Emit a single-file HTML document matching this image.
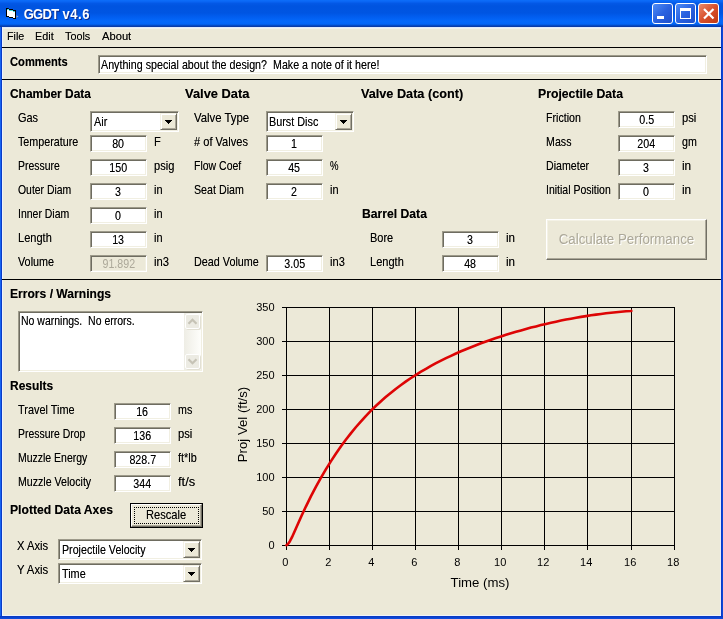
<!DOCTYPE html>
<html><head><meta charset="utf-8"><title>GGDT v4.6</title>
<style>
html,body{margin:0;padding:0}
body{width:723px;height:619px;overflow:hidden;position:relative;background:#ECE9D8;font-family:"Liberation Sans",sans-serif;font-size:11px;color:#000}
.abs{position:absolute}
.t{position:absolute;white-space:pre;font-size:11px;line-height:11px;transform-origin:0 0;display:block;text-shadow:0 0 0 rgba(0,0,0,.5)}
.tb{position:absolute;box-sizing:border-box;background:#fff;border:1px solid;border-color:#9D9A8A #fff #fff #9D9A8A;box-shadow:inset 1px 1px 0 #6E6C60,inset -1px -1px 0 #F1EFE2;text-align:center;overflow:hidden}
.tb.dis{background:#ECE9D8;color:#ACA899}.tb.dis .v{text-shadow:none}
.tb .v{text-shadow:0 0 0 rgba(0,0,0,.5);display:inline-block;font-size:11px;line-height:11px;transform:scale(.97,1.13);transform-origin:50% 0;position:relative;top:1.400px}
.hl{position:absolute;left:2px;width:719px;height:1px;background:#000}
.combo{position:absolute;box-sizing:border-box;height:21px;background:#fff;border:1px solid;border-color:#9D9A8A #fff #fff #9D9A8A;box-shadow:inset 1px 1px 0 #6E6C60,inset -1px -1px 0 #F1EFE2}
.cbtn{position:absolute;right:1px;top:1px;width:17px;height:17px;box-sizing:border-box;background:#ECE9D8;border:1px solid;border-color:#F4F2E6 #716F64 #716F64 #F4F2E6;box-shadow:inset 1px 1px 0 #fff,inset -1px -1px 0 #ACA899}
.cbtn svg{position:absolute;left:4px;top:6px}
.wb{position:absolute;top:3px;width:21px;height:21px;box-sizing:border-box;border:1px solid #fff;border-radius:3px}
#w{position:absolute;left:0;top:0;width:723px;height:619px;will-change:transform}
</style></head><body><div id="w">
<!-- window chrome -->
<div class="abs" style="left:0;top:0;width:723px;height:27px;background:linear-gradient(to bottom,#0D6EFA 0,#0A66F4 1.5px,#0358E6 3.5px,#0054E0 6px,#0055E2 13px,#025EF0 17px,#0468FA 21px,#0366F6 24px,#0250D0 25.3px,#0A3CA8 26px,#0A3CA8 27px)"></div>
<div class="abs" style="left:0;top:27px;width:1px;height:592px;background:#1664F0"></div>
<div class="abs" style="left:1px;top:27px;width:1px;height:592px;background:#0A3CC8"></div>
<div class="abs" style="left:2px;top:27px;width:1px;height:589px;background:#EEF3FC"></div>
<div class="abs" style="left:3px;top:27px;width:717px;height:1px;background:#E2ECFA"></div>
<div class="abs" style="left:3px;top:28px;width:717px;height:1px;background:#F2F2EC"></div>
<div class="abs" style="left:720px;top:27px;width:1px;height:589px;background:#E6EDFA"></div>
<div class="abs" style="left:721px;top:27px;width:1px;height:592px;background:#0A3CC8"></div>
<div class="abs" style="left:722px;top:27px;width:1px;height:592px;background:#0C48D8"></div>
<div class="abs" style="left:2px;top:615px;width:719px;height:1px;background:#EEF3FC"></div>
<div class="abs" style="left:0;top:616px;width:723px;height:3px;background:linear-gradient(to bottom,#0A38C0 0,#0A3CC8 1px,#0C4ADA 2px,#0C4CDC 3px)"></div>
<!-- icon -->
<svg class="abs" style="left:4px;top:6px" width="18" height="16" viewBox="4 6 18 16">
 <path d="M6 8H8.700V9H13V10H16V19H13V18H9V17H6Z" fill="#000"/>
 <path d="M7 9H9V10H13V11H15V18H13V17H9V16H7Z" fill="#fff"/>
 <rect x="7" y="9" width="1.700" height="1" fill="#45D6D6"/><rect x="9" y="10" width="4" height="1" fill="#45D6D6"/><rect x="13" y="11" width="2" height="1" fill="#45D6D6"/>
 <path d="M16.500 15.300l2 1.200-2 1.200z" fill="#A0A4B0"/>
</svg>
<span class="abs" style="left:23.700px;top:7.300px;font:bold 13px/13px 'Liberation Sans',sans-serif;color:#fff;text-shadow:1px 1px 0 #0A2A8C;white-space:pre;transform:scale(1,1.08);transform-origin:0 0"><span style="letter-spacing:-.700px">GGDT</span><span style="letter-spacing:.500px"> v4.6</span></span>
<div class="wb" style="left:652px;background:linear-gradient(135deg,#4E8CF6,#2A62E0 50%,#1E4FCC)"><div class="abs" style="left:4px;top:12px;width:7px;height:3px;background:#fff"></div></div>
<div class="wb" style="left:675px;background:linear-gradient(135deg,#4E8CF6,#2A62E0 50%,#1E4FCC)"><div class="abs" style="left:4px;top:4px;width:9px;height:7px;border:1px solid #fff;border-top-width:3px"></div></div>
<div class="wb" style="left:698px;background:linear-gradient(135deg,#EC8A6C,#D8502C 50%,#C03A14)"><svg class="abs" style="left:0;top:0" width="19" height="19"><path d="M5 5l9.5 9.5M14.500 5l-9.500 9.500" stroke="#fff" stroke-width="2.200" fill="none"/></svg></div>
<!-- separators -->
<div class="hl" style="top:47px"></div><div class="hl" style="top:79px"></div><div class="hl" style="top:279px"></div>
<!-- comment box -->
<div class="tb" style="left:98px;top:55px;width:609px;height:19px"></div>
<!-- combos -->
<div class="combo" style="left:90px;top:111px;width:89px"><div class="cbtn"><svg width="7" height="4" shape-rendering="crispEdges"><path d="M0 0h7v1h-1v1h-1v1h-1v1h-1v-1h-1v-1h-1v-1h-1z" fill="#000"/></svg></div></div>
<div class="combo" style="left:266px;top:111px;width:88px"><div class="cbtn"><svg width="7" height="4" shape-rendering="crispEdges"><path d="M0 0h7v1h-1v1h-1v1h-1v1h-1v-1h-1v-1h-1v-1h-1z" fill="#000"/></svg></div></div>
<div class="combo" style="left:58px;top:539px;width:144px"><div class="cbtn"><svg width="7" height="4" shape-rendering="crispEdges"><path d="M0 0h7v1h-1v1h-1v1h-1v1h-1v-1h-1v-1h-1v-1h-1z" fill="#000"/></svg></div></div>
<div class="combo" style="left:58px;top:563px;width:144px"><div class="cbtn"><svg width="7" height="4" shape-rendering="crispEdges"><path d="M0 0h7v1h-1v1h-1v1h-1v1h-1v-1h-1v-1h-1v-1h-1z" fill="#000"/></svg></div></div>
<!-- calc button (disabled) -->
<div class="abs" style="left:546px;top:219px;width:161px;height:41px;box-sizing:border-box;border:1px solid;border-color:#fff #716F64 #716F64 #fff;box-shadow:inset -1px -1px 0 #ACA899,inset 1px 1px 0 #F4F2E6;text-align:center"><span style="display:inline-block;font-size:13.33px;line-height:14px;margin-top:12.500px;transform:scale(1,1.07);color:#ACA899;text-shadow:1px 1px 0 #fff;white-space:pre">Calculate Performance</span></div>
<!-- rescale button -->
<div class="abs" style="left:130px;top:503px;width:73px;height:25px;box-sizing:border-box;border:1px solid #000;background:#ECE9D8">
 <div class="abs" style="left:0;top:0;width:71px;height:23px;box-sizing:border-box;border:1px solid;border-color:#fff #716F64 #716F64 #fff;box-shadow:inset -1px -1px 0 #ACA899"></div>
 <div class="abs" style="left:3px;top:3px;width:65px;height:17px;box-sizing:border-box;border:1px dotted #000"></div>
</div>
<!-- errors textarea -->
<div class="tb" style="left:18px;top:311px;width:185px;height:61px"></div>
<div class="abs" style="left:184px;top:313px;width:17px;height:57px;background:linear-gradient(to right,#EEEDE5,#FEFEFB)">
 <div class="abs" style="left:1px;top:1px;width:15px;height:15px;box-sizing:border-box;border:1px solid #fff;border-radius:2px;background:#ECEBE3;box-shadow:1px 1px 0 #E2E0D4"><svg width="13" height="13" class="abs" style="left:0;top:0"><path d="M2.500 8.800l4-4 4 4" stroke="#C6C3B6" stroke-width="2.200" fill="none"/></svg></div>
 <div class="abs" style="left:1px;top:41px;width:15px;height:15px;box-sizing:border-box;border:1px solid #fff;border-radius:2px;background:#ECEBE3;box-shadow:1px 1px 0 #E2E0D4"><svg width="13" height="13" class="abs" style="left:0;top:0"><path d="M2.500 4.200l4 4 4-4" stroke="#C6C3B6" stroke-width="2.200" fill="none"/></svg></div>
</div>
<span class="t" style="left:18.0px;top:111.5px;transform:scale(0.995,1.13)">Gas</span>
<span class="t" style="left:18.3px;top:135.5px;transform:scale(0.976,1.13)">Temperature</span>
<span class="t" style="left:18.3px;top:159.5px;transform:scale(0.948,1.13)">Pressure</span>
<span class="t" style="left:18.3px;top:183.5px;transform:scale(0.946,1.13)">Outer Diam</span>
<span class="t" style="left:18.3px;top:207.5px;transform:scale(0.952,1.13)">Inner Diam</span>
<span class="t" style="left:18.3px;top:231.5px;transform:scale(1.004,1.13)">Length</span>
<span class="t" style="left:17.5px;top:255.5px;transform:scale(0.983,1.13)">Volume</span>
<span class="t" style="left:154.1px;top:135.5px;transform:scale(1.012,1.13)">F</span>
<span class="t" style="left:153.8px;top:159.5px;transform:scale(1.006,1.13)">psig</span>
<span class="t" style="left:154.1px;top:183.5px;transform:scale(0.991,1.13)">in</span>
<span class="t" style="left:154.1px;top:207.5px;transform:scale(0.991,1.13)">in</span>
<span class="t" style="left:154.1px;top:231.5px;transform:scale(0.991,1.13)">in</span>
<span class="t" style="left:154.1px;top:255.5px;transform:scale(1.023,1.13)">in3</span>
<span class="t" style="left:193.5px;top:111.5px;transform:scale(1.033,1.13)">Valve Type</span>
<span class="t" style="left:194.3px;top:135.5px;transform:scale(1.007,1.13)"># of Valves</span>
<span class="t" style="left:193.8px;top:159.5px;transform:scale(0.954,1.13)">Flow Coef</span>
<span class="t" style="left:193.7px;top:183.5px;transform:scale(0.971,1.13)">Seat Diam</span>
<span class="t" style="left:193.7px;top:255.5px;transform:scale(0.982,1.13)">Dead Volume</span>
<span class="t" style="left:330.0px;top:159.5px;transform:scale(0.873,1.13)">%</span>
<span class="t" style="left:330.1px;top:183.5px;transform:scale(0.991,1.13)">in</span>
<span class="t" style="left:330.1px;top:255.5px;transform:scale(1.008,1.13)">in3</span>
<span class="t" style="left:369.8px;top:231.5px;transform:scale(0.998,1.13)">Bore</span>
<span class="t" style="left:369.8px;top:255.5px;transform:scale(1.004,1.13)">Length</span>
<span class="t" style="left:505.9px;top:231.5px;transform:scale(1.060,1.13)">in</span>
<span class="t" style="left:505.9px;top:255.5px;transform:scale(1.060,1.13)">in</span>
<span class="t" style="left:546.0px;top:111.5px;transform:scale(0.967,1.13)">Friction</span>
<span class="t" style="left:546.0px;top:135.5px;transform:scale(0.969,1.13)">Mass</span>
<span class="t" style="left:546.0px;top:159.5px;transform:scale(0.967,1.13)">Diameter</span>
<span class="t" style="left:546.0px;top:183.5px;transform:scale(0.954,1.13)">Initial Position</span>
<span class="t" style="left:681.7px;top:111.5px;transform:scale(1.019,1.13)">psi</span>
<span class="t" style="left:681.7px;top:135.5px;transform:scale(0.973,1.13)">gm</span>
<span class="t" style="left:681.8px;top:159.5px;transform:scale(1.074,1.13)">in</span>
<span class="t" style="left:681.8px;top:183.5px;transform:scale(1.074,1.13)">in</span>
<span class="t" style="left:18.2px;top:403.5px;transform:scale(0.992,1.13)">Travel Time</span>
<span class="t" style="left:18.3px;top:427.5px;transform:scale(0.949,1.13)">Pressure Drop</span>
<span class="t" style="left:18.3px;top:451.5px;transform:scale(0.953,1.13)">Muzzle Energy</span>
<span class="t" style="left:18.3px;top:475.5px;transform:scale(0.965,1.13)">Muzzle Velocity</span>
<span class="t" style="left:177.7px;top:403.5px;transform:scale(0.972,1.13)">ms</span>
<span class="t" style="left:177.7px;top:427.5px;transform:scale(1.019,1.13)">psi</span>
<span class="t" style="left:177.7px;top:451.5px;transform:scale(0.985,1.13)">ft*lb</span>
<span class="t" style="left:177.6px;top:475.5px;transform:scale(1.174,1.13)">ft/s</span>
<span class="t" style="left:16.7px;top:539.5px;transform:scale(1.021,1.13)">X Axis</span>
<span class="t" style="left:16.7px;top:563.5px;transform:scale(1.028,1.13)">Y Axis</span>
<span class="t" style="left:93.6px;top:115.5px;transform:scale(0.987,1.13)">Air</span>
<span class="t" style="left:269.4px;top:115.5px;transform:scale(0.985,1.13)">Burst Disc</span>
<span class="t" style="left:62.0px;top:543.5px;transform:scale(0.970,1.13)">Projectile Velocity</span>
<span class="t" style="left:62.0px;top:567.5px;transform:scale(0.985,1.13)">Time</span>
<span class="t" style="left:100.9px;top:58.5px;transform:scale(0.973,1.13)">Anything special about the design?  Make a note of it here!</span>
<span class="t" style="left:21.2px;top:314.5px;transform:scale(0.954,1.13)">No warnings.  No errors.</span>
<span class="t" style="left:9.8px;top:55.5px;transform:scale(1.017,1.13);font-weight:bold">Comments</span>
<span class="t" style="left:9.7px;top:87.5px;transform:scale(1.085,1.13);font-weight:bold">Chamber Data</span>
<span class="t" style="left:185.4px;top:87.5px;transform:scale(1.172,1.13);font-weight:bold">Valve Data</span>
<span class="t" style="left:361.2px;top:87.5px;transform:scale(1.152,1.13);font-weight:bold">Valve Data (cont)</span>
<span class="t" style="left:537.9px;top:87.5px;transform:scale(1.112,1.13);font-weight:bold">Projectile Data</span>
<span class="t" style="left:361.7px;top:207.5px;transform:scale(1.106,1.13);font-weight:bold">Barrel Data</span>
<span class="t" style="left:9.8px;top:287.5px;transform:scale(1.099,1.13);font-weight:bold">Errors / Warnings</span>
<span class="t" style="left:9.7px;top:379.5px;transform:scale(1.087,1.13);font-weight:bold">Results</span>
<span class="t" style="left:9.7px;top:503.5px;transform:scale(1.105,1.13);font-weight:bold">Plotted Data Axes</span>
<span class="t" style="left:146.1px;top:508.7px;transform:scale(1.012,1.13)">Rescale</span>
<span class="t" style="left:6.8px;top:30.7px;transform:scale(0.980,1.0)">File</span>
<span class="t" style="left:34.9px;top:30.7px;transform:scale(0.985,1.0)">Edit</span>
<span class="t" style="left:65.3px;top:30.7px;transform:scale(0.984,1.0)">Tools</span>
<span class="t" style="left:102.1px;top:30.7px;transform:scale(1.016,1.0)">About</span>
<div class="tb" style="left:90px;top:135px;width:57px;height:17px"><span class="v">80</span></div>
<div class="tb" style="left:90px;top:159px;width:57px;height:17px"><span class="v">150</span></div>
<div class="tb" style="left:90px;top:183px;width:57px;height:17px"><span class="v">3</span></div>
<div class="tb" style="left:90px;top:207px;width:57px;height:17px"><span class="v">0</span></div>
<div class="tb" style="left:90px;top:231px;width:57px;height:17px"><span class="v">13</span></div>
<div class="tb dis" style="left:90px;top:255px;width:57px;height:17px"><span class="v">91.892</span></div>
<div class="tb" style="left:266px;top:135px;width:57px;height:17px"><span class="v">1</span></div>
<div class="tb" style="left:266px;top:159px;width:57px;height:17px"><span class="v">45</span></div>
<div class="tb" style="left:266px;top:183px;width:57px;height:17px"><span class="v">2</span></div>
<div class="tb" style="left:266px;top:255px;width:57px;height:17px"><span class="v">3.05</span></div>
<div class="tb" style="left:442px;top:231px;width:57px;height:17px"><span class="v">3</span></div>
<div class="tb" style="left:442px;top:255px;width:57px;height:17px"><span class="v">48</span></div>
<div class="tb" style="left:618px;top:111px;width:57px;height:17px"><span class="v">0.5</span></div>
<div class="tb" style="left:618px;top:135px;width:57px;height:17px"><span class="v">204</span></div>
<div class="tb" style="left:618px;top:159px;width:57px;height:17px"><span class="v">3</span></div>
<div class="tb" style="left:618px;top:183px;width:57px;height:17px"><span class="v">0</span></div>
<div class="tb" style="left:114px;top:403px;width:57px;height:17px"><span class="v">16</span></div>
<div class="tb" style="left:114px;top:427px;width:57px;height:17px"><span class="v">136</span></div>
<div class="tb" style="left:114px;top:451px;width:57px;height:17px"><span class="v">828.7</span></div>
<div class="tb" style="left:114px;top:475px;width:57px;height:17px"><span class="v">344</span></div>
<svg class="abs" style="left:0;top:0" width="723" height="619" viewBox="0 0 723 619" font-family="Liberation Sans, sans-serif">
<g fill="#000" shape-rendering="crispEdges">
<rect x="286" y="307" width="1" height="243"/>
<rect x="329" y="307" width="1" height="243"/>
<rect x="372" y="307" width="1" height="243"/>
<rect x="415" y="307" width="1" height="243"/>
<rect x="458" y="307" width="1" height="243"/>
<rect x="501" y="307" width="1" height="243"/>
<rect x="544" y="307" width="1" height="243"/>
<rect x="587" y="307" width="1" height="243"/>
<rect x="631" y="307" width="1" height="243"/>
<rect x="674" y="307" width="1" height="243"/>
<rect x="282" y="307" width="393" height="1"/>
<rect x="282" y="341" width="393" height="1"/>
<rect x="282" y="375" width="393" height="1"/>
<rect x="282" y="409" width="393" height="1"/>
<rect x="282" y="443" width="393" height="1"/>
<rect x="282" y="477" width="393" height="1"/>
<rect x="282" y="511" width="393" height="1"/>
<rect x="282" y="545" width="393" height="1"/>
</g>
<path d="M286.5 545.2 L288.3 543.6 L289.8 541.4 L292.0 537.2 L296.0 528.3 L301.0 517.0 L306.0 506.3 L311.0 496.2 L316.0 486.7 L321.0 477.7 L326.0 469.1 L331.0 461.1 L336.0 453.5 L341.0 446.3 L346.0 439.5 L351.0 433.1 L356.0 427.0 L361.0 421.3 L366.0 415.8 L371.0 410.7 L376.0 405.8 L381.0 401.2 L386.0 396.8 L391.0 392.7 L396.0 388.7 L401.0 385.0 L406.0 381.4 L411.0 378.0 L416.0 374.8 L421.0 371.7 L426.0 368.8 L431.0 365.9 L436.0 363.2 L441.0 360.7 L446.0 358.2 L451.0 355.8 L456.0 353.5 L461.0 351.3 L466.0 349.2 L471.0 347.2 L476.0 345.2 L481.0 343.3 L486.0 341.5 L491.0 339.8 L496.0 338.1 L501.0 336.4 L506.0 334.8 L511.0 333.3 L516.0 331.8 L521.0 330.4 L526.0 329.0 L531.0 327.6 L536.0 326.4 L541.0 325.1 L546.0 323.9 L551.0 322.8 L556.0 321.7 L561.0 320.6 L566.0 319.6 L571.0 318.7 L576.0 317.8 L581.0 316.9 L586.0 316.1 L591.0 315.3 L596.0 314.6 L601.0 314.0 L606.0 313.3 L611.0 312.8 L616.0 312.2 L621.0 311.8 L626.0 311.3 L631.0 311.0 L631.3 310.9" fill="none" stroke="#DD0505" stroke-width="2.6" stroke-linejoin="round" stroke-linecap="round"/>
<g font-size="11" fill="#000">
<text x="274.5" y="310.9" text-anchor="end">350</text>
<text x="274.5" y="344.9" text-anchor="end">300</text>
<text x="274.5" y="378.9" text-anchor="end">250</text>
<text x="274.5" y="412.9" text-anchor="end">200</text>
<text x="274.5" y="446.9" text-anchor="end">150</text>
<text x="274.5" y="480.9" text-anchor="end">100</text>
<text x="274.5" y="514.9" text-anchor="end">50</text>
<text x="274.5" y="548.9" text-anchor="end">0</text>
<text x="285.2" y="565.8" text-anchor="middle">0</text>
<text x="328.2" y="565.8" text-anchor="middle">2</text>
<text x="371.2" y="565.8" text-anchor="middle">4</text>
<text x="414.2" y="565.8" text-anchor="middle">6</text>
<text x="457.2" y="565.8" text-anchor="middle">8</text>
<text x="500.2" y="565.8" text-anchor="middle">10</text>
<text x="543.2" y="565.8" text-anchor="middle">12</text>
<text x="586.2" y="565.8" text-anchor="middle">14</text>
<text x="630.2" y="565.8" text-anchor="middle">16</text>
<text x="673.2" y="565.8" text-anchor="middle">18</text>
</g>
<text x="480" y="586.5" font-size="13.2" text-anchor="middle">Time (ms)</text>
<text transform="translate(247 424.5) rotate(-90)" font-size="13.2" text-anchor="middle">Proj Vel (ft/s)</text>
</svg>
</div></body></html>
